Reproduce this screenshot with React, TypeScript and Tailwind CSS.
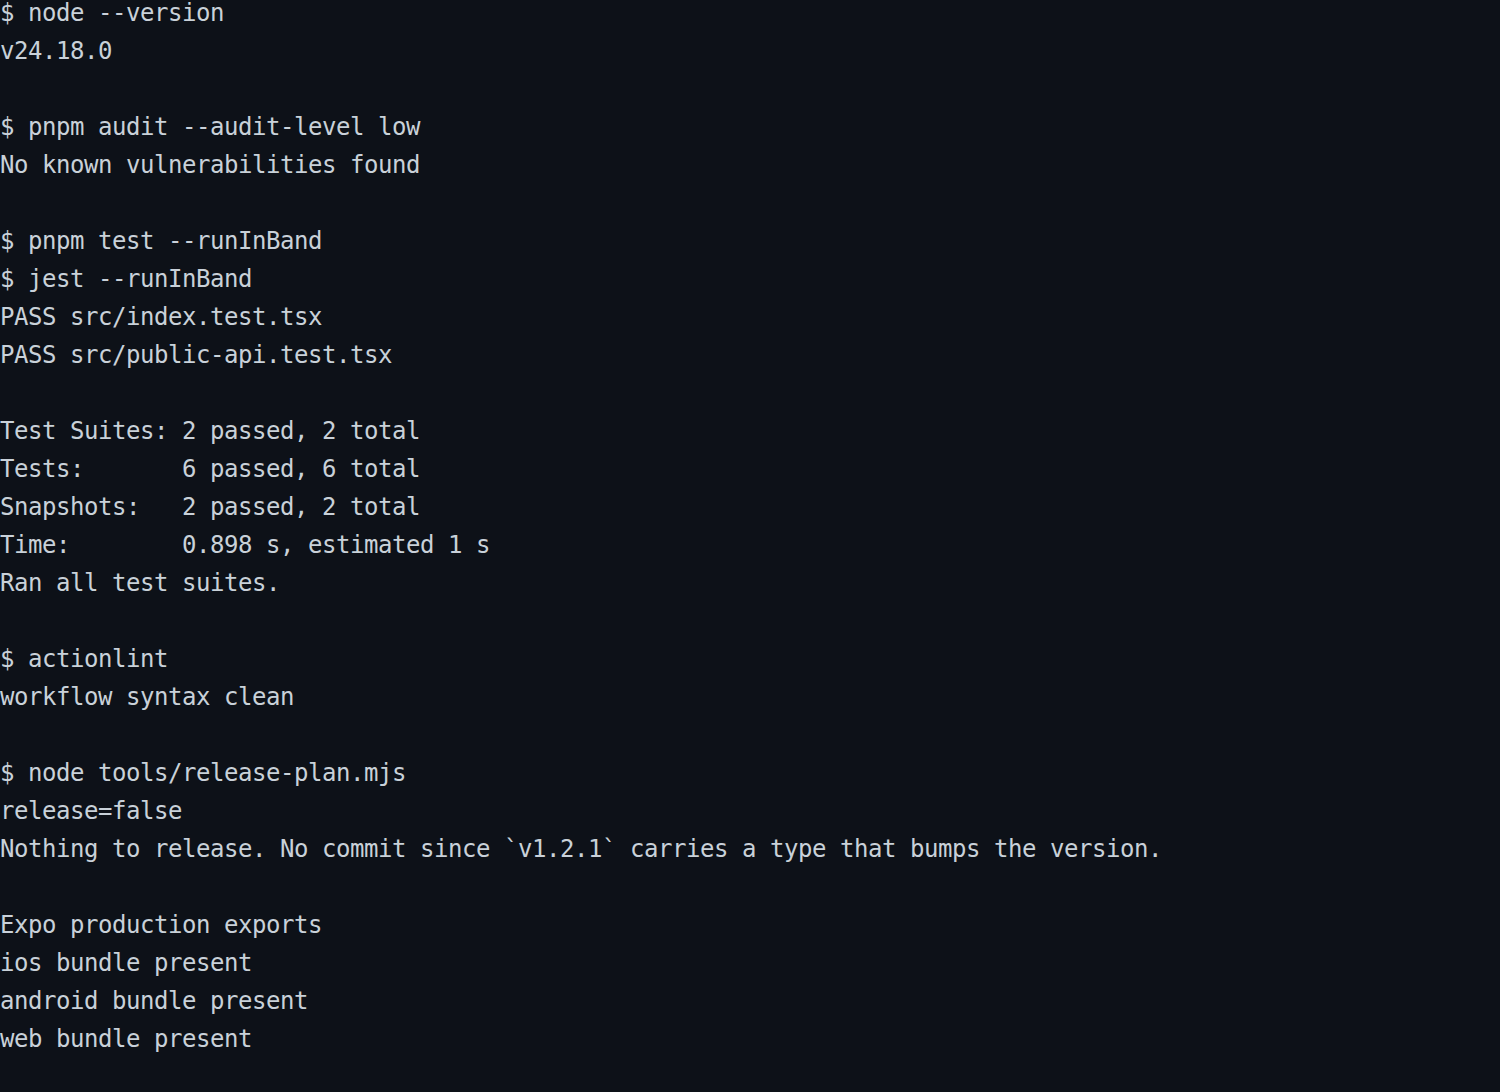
import React from "react";

const lines: string[] = [
  "$ node --version",
  "v24.18.0",
  "",
  "$ pnpm audit --audit-level low",
  "No known vulnerabilities found",
  "",
  "$ pnpm test --runInBand",
  "$ jest --runInBand",
  "PASS src/index.test.tsx",
  "PASS src/public-api.test.tsx",
  "",
  "Test Suites: 2 passed, 2 total",
  "Tests:       6 passed, 6 total",
  "Snapshots:   2 passed, 2 total",
  "Time:        0.898 s, estimated 1 s",
  "Ran all test suites.",
  "",
  "$ actionlint",
  "workflow syntax clean",
  "",
  "$ node tools/release-plan.mjs",
  "release=false",
  "Nothing to release. No commit since `v1.2.1` carries a type that bumps the version.",
  "",
  "Expo production exports",
  "ios bundle present",
  "android bundle present",
  "web bundle present",
];

export default function App() {
  return (
    <div className="w-[1500px] h-[1092px] overflow-hidden bg-[#0d1118] text-[#c9d1d9]">
      <pre className="-mt-[6px] m-0 font-['DejaVu_Sans_Mono',monospace] text-[24px] leading-[38px] tracking-[-0.45px] whitespace-pre">
        {lines.map((l, i) => (
          <div key={i} className="h-[38px]">
            {l}
          </div>
        ))}
      </pre>
    </div>
  );
}
